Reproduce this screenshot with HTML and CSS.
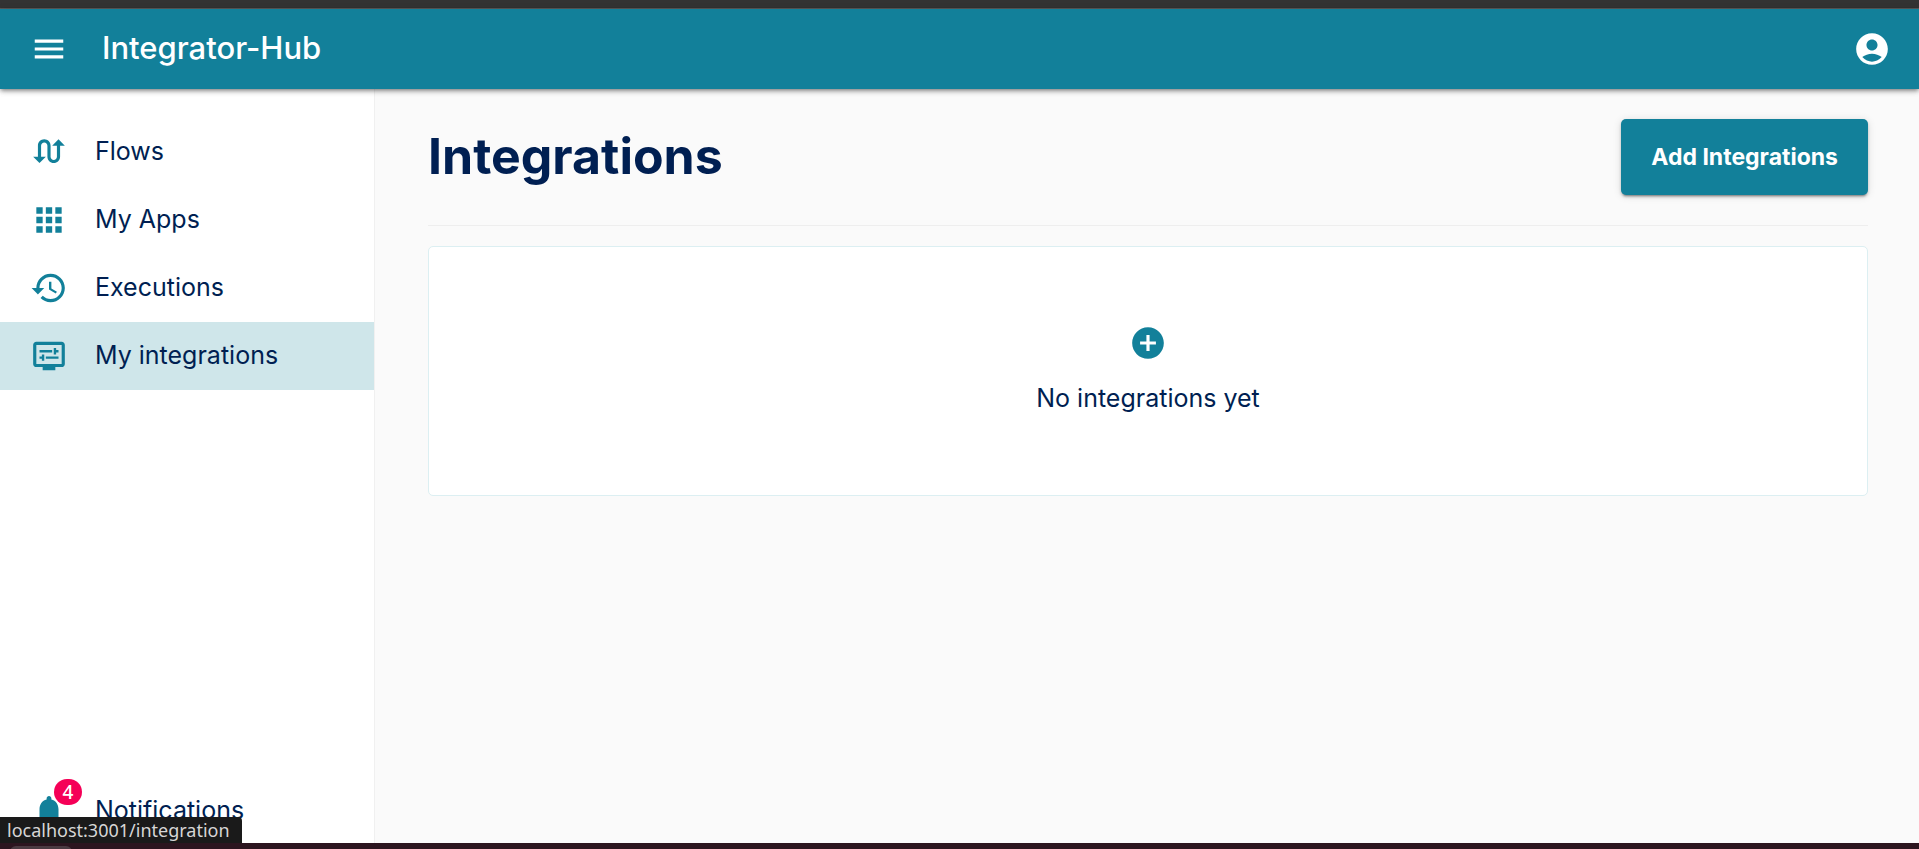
FILE: index.html
```html
<!DOCTYPE html>
<html lang="en">
<head>
<meta charset="utf-8">
<meta name="viewport" content="width=device-width, initial-scale=1">
<title>Integrator-Hub</title>
<link rel="stylesheet" href="styles.css">
</head>
<body>
<div class="window-edge"></div>
<header class="appbar">
  <button class="icon-button" type="button" aria-label="Toggle menu">
    <svg class="icon" viewBox="0 0 24 24"><path d="M3 18h18v-2H3v2zm0-5h18v-2H3v2zm0-7v2h18V6H3z"/></svg>
  </button>
  <span class="brand">Integrator-Hub</span>
  <button class="icon-button" type="button" aria-label="Account">
    <svg class="icon" viewBox="0 0 24 24"><path d="M12 2C6.48 2 2 6.48 2 12s4.48 10 10 10 10-4.48 10-10S17.52 2 12 2zm0 4c1.93 0 3.5 1.57 3.5 3.5S13.93 13 12 13s-3.5-1.57-3.5-3.5S10.07 6 12 6zm0 14c-2.03 0-4.43-.82-6.14-2.88C7.55 15.8 9.68 15 12 15s4.45.8 6.14 2.12C16.43 19.18 14.03 20 12 20z"/></svg>
  </button>
</header>
<div class="layout">
  <nav class="sidebar">
    <a class="nav-item" href="#flows">
      <svg class="icon" viewBox="0 0 24 24"><path d="M18 4l-4 4h3v7c0 1.1-.9 2-2 2s-2-.9-2-2V8c0-2.21-1.79-4-4-4S5 5.79 5 8v7H2l4 4 4-4H7V8c0-1.1.9-2 2-2s2 .9 2 2v7c0 2.21 1.79 4 4 4s4-1.79 4-4V8h3l-4-4z"/></svg>
      <span class="label">Flows</span>
    </a>
    <a class="nav-item" href="#apps">
      <svg class="icon" viewBox="0 0 24 24"><path d="M4 8h4V4H4v4zm6 12h4v-4h-4v4zm-6 0h4v-4H4v4zm0-6h4v-4H4v4zm6 0h4v-4h-4v4zm6-10v4h4V4h-4zm-6 4h4V4h-4v4zm6 6h4v-4h-4v4zm0 6h4v-4h-4v4z"/></svg>
      <span class="label">My Apps</span>
    </a>
    <a class="nav-item" href="#executions">
      <svg class="icon" viewBox="0 0 24 24"><path d="M13 3c-4.97 0-9 4.03-9 9H1l3.89 3.89.07.14L9 12H6c0-3.87 3.13-7 7-7s7 3.13 7 7-3.13 7-7 7c-1.93 0-3.68-.79-4.94-2.06l-1.42 1.42C8.27 19.99 10.51 21 13 21c4.97 0 9-4.03 9-9s-4.03-9-9-9zm-1 5v5l4.28 2.54.72-1.21-3.5-2.08V8H12z"/></svg>
      <span class="label">Executions</span>
    </a>
    <a class="nav-item selected" href="#integration" aria-current="page">
      <svg class="icon" viewBox="0 0 24 24"><path fill-rule="evenodd" d="M20 3H4c-1.11 0-2 .89-2 2v12c0 1.1.89 2 2 2h4v2h8v-2h4c1.1 0 2-.9 2-2V5c0-1.11-.9-2-2-2zm0 14H4V5h16v12z"/><path d="M6 8.25h8v1.5H6zM16.5 9.75H18v-1.5h-1.5V7H15v4h1.5zM10 12.25h8v1.5h-8zM7.5 15H9v-4H7.5v1.25H6v1.5h1.5z"/></svg>
      <span class="label">My integrations</span>
    </a>
    <a class="nav-item bottom" href="#notifications">
      <span class="badge-anchor">
        <svg class="icon" viewBox="0 0 24 24"><path d="M12 22c1.1 0 2-.9 2-2h-4c0 1.1.89 2 2 2zm6-6v-5c0-3.07-1.64-5.64-4.5-6.32V4c0-.83-.67-1.5-1.5-1.5s-1.5.67-1.5 1.5v.68C7.63 5.36 6 7.92 6 11v5l-2 2v1h16v-1l-2-2z"/></svg>
        <span class="badge">4</span>
      </span>
      <span class="label">Notifications</span>
    </a>
  </nav>
  <main class="content">
    <div class="page-head">
      <h1>Integrations</h1>
      <button class="primary" type="button">Add Integrations</button>
    </div>
    <section class="empty-card">
      <svg class="icon" viewBox="0 0 24 24"><path d="M12 2C6.48 2 2 6.48 2 12s4.48 10 10 10 10-4.48 10-10S17.52 2 12 2zm5 11h-4v4h-2v-4H7v-2h4V7h2v4h4v2z"/></svg>
      <p>No integrations yet</p>
    </section>
  </main>
</div>
<footer class="desktop-edge"><div class="dock-tab"></div></footer>
<div class="status">localhost:3001/integration</div>
</body>
</html>
```
FILE: styles.css
```css
* { box-sizing: border-box; }

body {
  margin: 0;
  height: 100vh;
  display: flex;
  flex-direction: column;
  position: relative;
  overflow: hidden;
  background: #fafafa;
  color: #001f52;
  font-family: Inter, "Liberation Sans", sans-serif;
  font-size: 25px;
  line-height: 36px;
}

.icon {
  display: block;
  flex: none;
  width: 38px;
  height: 38px;
  fill: #12809a;
}

.window-edge {
  flex: none;
  height: 9px;
  background: #333;
  border-bottom: 1px solid #5a5a5a;
}

.appbar {
  flex: none;
  display: flex;
  align-items: center;
  height: 80px;
  padding: 0 28px 0 30px;
  background: #12809a;
  color: #fff;
  position: relative;
  z-index: 1;
  box-shadow: 0 2px 4px -1px rgba(0, 0, 0, .4), 0 3px 5px rgba(0, 0, 0, .14), 0 1px 8px rgba(0, 0, 0, .1);
}

.icon-button {
  padding: 0;
  border: 0;
  background: none;
  cursor: pointer;
}

.icon-button .icon { fill: #fff; }

.brand {
  flex: 1;
  margin-left: 34px;
  padding-bottom: 2px;
  font-size: 31px;
  font-weight: 500;
}

.layout {
  flex: 1;
  min-height: 0;
  display: flex;
}

.sidebar {
  flex: none;
  display: flex;
  flex-direction: column;
  width: 375px;
  padding-top: 29px;
  background: #fff;
  border-right: 1px solid #f0f0f0;
}

.nav-item {
  flex: none;
  display: flex;
  align-items: center;
  gap: 27px;
  height: 68px;
  padding: 0 30px;
  color: inherit;
  text-decoration: none;
}

.nav-item.selected { background: #cfe6ea; }

.label { padding-bottom: 3px; }

.nav-item.bottom {
  height: 64px;
  margin-top: auto;
}

.badge-anchor { position: relative; }

.badge {
  position: absolute;
  left: 24px;
  top: -13px;
  width: 28px;
  height: 26px;
  border-radius: 13px;
  background: #f50057;
  color: #fff;
  font: 500 19px/26px "Noto Sans", sans-serif;
  text-align: center;
}

.content {
  flex: 1;
  min-width: 0;
  padding: 30px 51px 30px 53px;
}

.page-head {
  display: flex;
  align-items: center;
  justify-content: space-between;
  padding-bottom: 30px;
  border-bottom: 1px solid #eee;
}

h1 {
  margin: 0;
  padding-bottom: 2px;
  font-size: 50px;
  line-height: 60px;
  font-weight: 700;
}

.primary {
  height: 76px;
  padding: 0 30px;
  border: 0;
  border-radius: 5px;
  background: #12809a;
  color: #fff;
  font: inherit;
  font-size: 23px;
  font-weight: 700;
  cursor: pointer;
  box-shadow: 0 3px 2px -2px rgba(0, 0, 0, .3), 0 2px 3px rgba(0, 0, 0, .2), 0 1px 8px rgba(0, 0, 0, .12);
}

.empty-card {
  display: flex;
  flex-direction: column;
  align-items: center;
  gap: 18px;
  margin-top: 20px;
  padding: 77px 20px 79px;
  background: #fff;
  border: 1px solid #dceff2;
  border-radius: 5px;
}

.empty-card p { margin: 0; }

.desktop-edge {
  flex: none;
  height: 6px;
  padding: 3px 10px 0;
  overflow: hidden;
  background: #2c151f;
}

.dock-tab {
  width: 62px;
  height: 12px;
  border-radius: 6px;
  background: #4a3a41;
}

.status {
  position: absolute;
  left: 0;
  bottom: 6px;
  height: 26px;
  padding: 0 12px 0 7px;
  border-top-right-radius: 4px;
  background: #1a1a1a;
  color: #d6d6d6;
  font: 18px/26px "Noto Sans", sans-serif;
}
```
